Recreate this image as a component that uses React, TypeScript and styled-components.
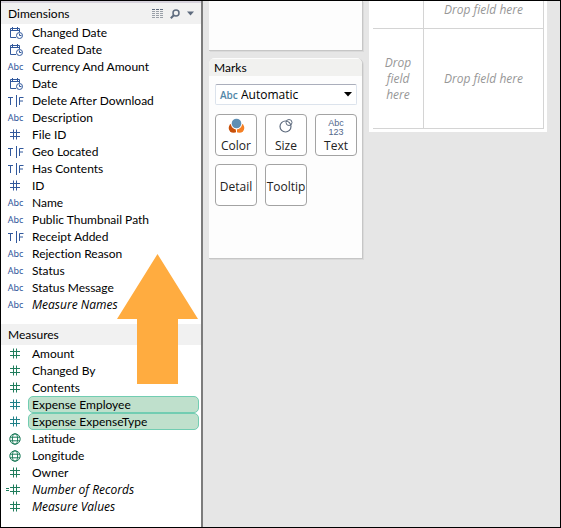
import React from "react";
import styled, { createGlobalStyle } from "styled-components";

const GlobalStyle = createGlobalStyle`
  *, *::before, *::after { box-sizing: border-box; }
  body { margin: 0; font-family: Lato, "Open Sans", sans-serif; font-size: 12px; font-variant-ligatures: none; color: #000; }
  button, select { font: inherit; color: inherit; font-variant-ligatures: none; }
  ul { list-style: none; margin: 0; padding: 0; }
  h2 { margin: 0; font-weight: 400; font-size: 12px; }
`;

const Window = styled.div`
  display: flex;
  align-items: stretch;
  min-height: 100vh;
  border: 1px solid #000;
  background: #e6e6e6;
`;

const DataPane = styled.aside`
  position: relative;
  flex: 0 0 202px;
  border-right: 2px solid #7c7c7c;
  background: #fff;
`;

const FieldSection = styled.section`
  & + & { margin-top: 11px; }
`;

const SectionHeader = styled.header<{ $ruled?: boolean }>`
  display: flex;
  align-items: center;
  justify-content: space-between;
  height: ${(p) => (p.$ruled ? 23 : 21)}px;
  padding: 0 6px 0 7px;
  border-top: ${(p) => (p.$ruled ? "2px solid #d6d2dc" : "0")};
  background: #f1f1f1;
`;

const HeaderTools = styled.div`
  display: flex;
  align-items: center;
  gap: 6px;
`;

const ToolButton = styled.button`
  display: flex;
  padding: 0;
  border: 0;
  background: none;
`;

const FieldRow = styled.button<{ $measure?: boolean; $selected?: boolean }>`
  display: flex;
  align-items: center;
  width: 100%;
  height: 17px;
  padding: 0 2px 0 3px;
  border: 0;
  background: none;
  text-align: left;
  color: ${(p) => (p.$selected ? "#1f8088" : p.$measure ? "#1f7d5c" : "#31589c")};
`;

const FieldIcon = styled.span`
  display: flex;
  justify-content: center;
  flex: 0 0 24px;
  padding-right: 2px;
`;

const FieldName = styled.span<{ $selected?: boolean; $italic?: boolean }>`
  flex: 1;
  height: 17px;
  padding: 0 3px;
  border: 1px solid ${(p) => (p.$selected ? "#72cdb2" : "transparent")};
  border-radius: 5px;
  background: ${(p) => (p.$selected ? "#bfe0cc" : "transparent")};
  color: #000;
  line-height: 16px;
  font-family: ${(p) => (p.$italic ? '"Open Sans", sans-serif' : "inherit")};
  font-style: ${(p) => (p.$italic ? "italic" : "normal")};
  white-space: nowrap;
`;

const TypeText = styled.span`
  padding-left: 1px;
  font-family: "Noto Sans", sans-serif;
  font-size: 9px;
  line-height: 16px;
`;

const PointerArrow = styled.svg`
  position: absolute;
  left: 116px;
  top: 252px;
  pointer-events: none;
`;

const Shelves = styled.div`
  display: flex;
  flex-direction: column;
  gap: 7px;
  flex: 0 0 154px;
  margin-left: 6px;
`;

const Card = styled.section<{ $rounded?: boolean }>`
  height: ${(p) => (p.$rounded ? 201 : 50)}px;
  border-right: 1px solid #c6c6c6;
  border-bottom: 1px solid #c6c6c6;
  border-radius: ${(p) => (p.$rounded ? "6px 6px 0 0" : "0")};
  background: #fdfdfd;
  box-shadow: 1px 1px 0 #dadada;
  overflow: hidden;
`;

const CardTitle = styled.h2`
  height: 18px;
  padding-left: 5px;
  border-top: 1px solid #fcfcfc;
  background: #f1f1ef;
  line-height: 18px;
`;

const CardBody = styled.div`
  display: grid;
  gap: 9px;
  padding: 8px 5px 0 6px;
`;

const MarkType = styled.label`
  display: grid;
  grid-template-columns: 26px 1fr 16px;
  align-items: center;
  height: 21px;
  border: 1px solid #dce3ec;
  border-top-color: #aaaebb;
  border-radius: 2px;
  background: #fff;
`;

const MarkPrefix = styled.span`
  grid-area: 1 / 1;
  padding-left: 4px;
  color: #5287a8;
  font-family: "Open Sans", sans-serif;
  font-size: 10px;
  font-weight: 600;
`;

const MarkSelect = styled.select`
  grid-area: 1 / 1 / 2 / 4;
  height: 19px;
  padding: 0 16px 0 25px;
  border: 0;
  background: none;
  appearance: none;
  font-family: "Open Sans", sans-serif;
  line-height: 19px;
`;

const SelectArrow = styled.svg`
  grid-area: 1 / 3;
  margin-left: 4px;
  pointer-events: none;
`;

const MarkGrid = styled.div`
  display: grid;
  grid-template-columns: repeat(3, 42px);
  gap: 8px;
`;

const MarkButton = styled.button`
  display: flex;
  flex-direction: column;
  align-items: center;
  justify-content: center;
  gap: 1px;
  height: 42px;
  padding: 3px 0 0;
  border: 1px solid #a3a3a3;
  border-radius: 4px;
  background: #fff;
  color: #222;
  font-family: "Open Sans", sans-serif;
  line-height: 20px;
  white-space: nowrap;

  & > svg { flex: none; }
`;

const TextMark = styled.span`
  display: block;
  flex: none;
  height: 18px;
  padding-top: 2px;
  color: #52678c;
  font-family: "Liberation Sans", sans-serif;
  font-size: 9px;
  line-height: 9px;
`;

const DropTable = styled.div`
  display: grid;
  grid-template-columns: 51px 1fr;
  grid-template-rows: 28px 100px;
  flex: 1;
  align-self: flex-start;
  margin: 0 13px 0 6px;
  padding: 0 3px 3px 4px;
  background: #fff;
`;

const DropZone = styled.div<{ $head?: boolean }>`
  display: flex;
  align-items: center;
  justify-content: center;
  padding: 0 8px;
  padding-bottom: ${(p) => (p.$head ? 10 : 0)}px;
  border-right: 1px solid #d4d4d4;
  border-bottom: 1px solid #d4d4d4;
  color: #979797;
  font-family: "Open Sans", sans-serif;
  font-style: italic;
  line-height: 16px;
  text-align: center;
`;

type Kind = "date" | "abc" | "bool" | "number" | "geo" | "calc";
type Field = { name: string; kind: Kind; italic?: boolean; selected?: boolean };

const dimensions: Field[] = [
  { name: "Changed Date", kind: "date" },
  { name: "Created Date", kind: "date" },
  { name: "Currency And Amount", kind: "abc" },
  { name: "Date", kind: "date" },
  { name: "Delete After Download", kind: "bool" },
  { name: "Description", kind: "abc" },
  { name: "File ID", kind: "number" },
  { name: "Geo Located", kind: "bool" },
  { name: "Has Contents", kind: "bool" },
  { name: "ID", kind: "number" },
  { name: "Name", kind: "abc" },
  { name: "Public Thumbnail Path", kind: "abc" },
  { name: "Receipt Added", kind: "bool" },
  { name: "Rejection Reason", kind: "abc" },
  { name: "Status", kind: "abc" },
  { name: "Status Message", kind: "abc" },
  { name: "Measure Names", kind: "abc", italic: true },
];

const measures: Field[] = [
  { name: "Amount", kind: "number" },
  { name: "Changed By", kind: "number" },
  { name: "Contents", kind: "number" },
  { name: "Expense Employee", kind: "number", selected: true },
  { name: "Expense ExpenseType", kind: "number", selected: true },
  { name: "Latitude", kind: "geo" },
  { name: "Longitude", kind: "geo" },
  { name: "Owner", kind: "number" },
  { name: "Number of Records", kind: "calc", italic: true },
  { name: "Measure Values", kind: "number", italic: true },
];

const KindIcon = ({ kind }: { kind: Kind }) => {
  if (kind === "abc") return <TypeText>Abc</TypeText>;
  if (kind === "date")
    return (
      <svg width="18" height="15" viewBox="0 0 18 15" fill="none" stroke="currentColor" aria-hidden="true">
        <path d="M10 12.5H4.5V3.5H13.5V7M4 5.5H14M6.5 2V5M11.5 2V5" />
        <circle cx="13.5" cy="10.5" r="3" fill="#fff" />
        <path d="M13.5 8.5V10.5H15.5" />
      </svg>
    );
  if (kind === "bool")
    return (
      <svg width="18" height="12" viewBox="0 0 18 12" fill="none" stroke="currentColor" aria-label="T|F">
        <path d="M2 2.5H7M4.5 2V10M10.5 0V12M13.5 10V2.5H17.5M13.5 6H17" />
      </svg>
    );
  if (kind === "geo")
    return (
      <svg width="12" height="12" viewBox="0 0 12 12" fill="none" stroke="currentColor" aria-hidden="true">
        <circle cx="6" cy="6" r="5.2" />
        <ellipse cx="6" cy="6" rx="2.6" ry="5.2" />
        <path d="M1 4.2H11M1 7.8H11" />
      </svg>
    );
  return (
    <svg width="20" height="11" viewBox="0 0 20 11" fill="none" stroke="currentColor" aria-hidden="true">
      <path d="M5 3.5H15M5 7.5H15M8.5 0.5V10.5M11.5 0.5V10.5" />
      {kind === "calc" && <path d="M1 4.5H4M1 6.5H4" />}
    </svg>
  );
};

const FieldList = ({ fields, measure }: { fields: Field[]; measure?: boolean }) => (
  <ul>
    {fields.map((f) => (
      <li key={f.name}>
        <FieldRow $measure={measure} $selected={f.selected}>
          <FieldIcon>
            <KindIcon kind={f.kind} />
          </FieldIcon>
          <FieldName $selected={f.selected} $italic={f.italic}>
            {f.name}
          </FieldName>
        </FieldRow>
      </li>
    ))}
  </ul>
);

export default function App() {
  return (
    <Window>
      <GlobalStyle />
      <DataPane>
        <FieldSection>
          <SectionHeader $ruled>
            <h2>Dimensions</h2>
            <HeaderTools>
              <ToolButton aria-label="View data">
                <svg width="12" height="10" viewBox="0 0 12 10" stroke="#9aa0a8" strokeDasharray="3 1">
                  <path d="M0 .5H12" stroke="#5e6b7e" />
                  <path d="M0 2.5H12M0 4.5H12M0 6.5H12M0 8.5H12" />
                </svg>
              </ToolButton>
              <ToolButton aria-label="Find field">
                <svg width="10" height="10" viewBox="0 0 10 10" fill="none" stroke="#5e6b7e">
                  <circle cx="6" cy="4" r="3" strokeWidth="1.5" />
                  <path d="M4 6L.8 9.2" strokeWidth="2" />
                </svg>
              </ToolButton>
              <ToolButton aria-label="Dimensions menu">
                <svg width="9" height="5" viewBox="0 0 9 5">
                  <path d="M1 .5H8L4.5 4.5Z" fill="#5e6b7e" />
                </svg>
              </ToolButton>
            </HeaderTools>
          </SectionHeader>
          <FieldList fields={dimensions} />
        </FieldSection>
        <FieldSection>
          <SectionHeader>
            <h2>Measures</h2>
          </SectionHeader>
          <FieldList fields={measures} measure />
        </FieldSection>
        <PointerArrow width="82" height="132" viewBox="0 0 82 132" aria-hidden="true">
          <path d="M40.5 1L81 66H61V131H20V66H0Z" fill="#ffac40" />
        </PointerArrow>
      </DataPane>

      <Shelves>
        <Card />
        <Card $rounded>
          <CardTitle>Marks</CardTitle>
          <CardBody>
            <MarkType>
              <MarkPrefix>Abc</MarkPrefix>
              <MarkSelect aria-label="Mark type" defaultValue="Automatic">
                <option>Automatic</option>
              </MarkSelect>
              <SelectArrow width="8" height="5" viewBox="0 0 8 5">
                <path d="M0 0H8L4 4.5Z" />
              </SelectArrow>
            </MarkType>
            <MarkGrid>
              <MarkButton>
                <svg width="17" height="18" viewBox="0 0 17 18" aria-hidden="true">
                  <circle cx="5.5" cy="11" r="4.8" fill="#c8500a" />
                  <circle cx="11.5" cy="11" r="4.8" fill="#f58025" />
                  <circle cx="8.5" cy="6.8" r="5.6" fill="#fff" />
                  <path d="M8.5 10V16" stroke="#fff" />
                  <circle cx="8.5" cy="6.5" r="4.8" fill="#5f8fb4" />
                </svg>
                Color
              </MarkButton>
              <MarkButton>
                <svg width="16" height="18" viewBox="0 0 16 18" fill="none" stroke="#5e6b7e" aria-hidden="true">
                  <circle cx="7.5" cy="9.5" r="5.5" strokeWidth="1.2" />
                  <circle cx="11" cy="5.5" r="3" />
                </svg>
                Size
              </MarkButton>
              <MarkButton>
                <TextMark>
                  Abc
                  <br />
                  123
                </TextMark>
                Text
              </MarkButton>
              <MarkButton>Detail</MarkButton>
              <MarkButton>Tooltip</MarkButton>
            </MarkGrid>
          </CardBody>
        </Card>
      </Shelves>

      <DropTable>
        <DropZone $head />
        <DropZone $head>Drop field here</DropZone>
        <DropZone>Drop field here</DropZone>
        <DropZone>Drop field here</DropZone>
      </DropTable>
    </Window>
  );
}
